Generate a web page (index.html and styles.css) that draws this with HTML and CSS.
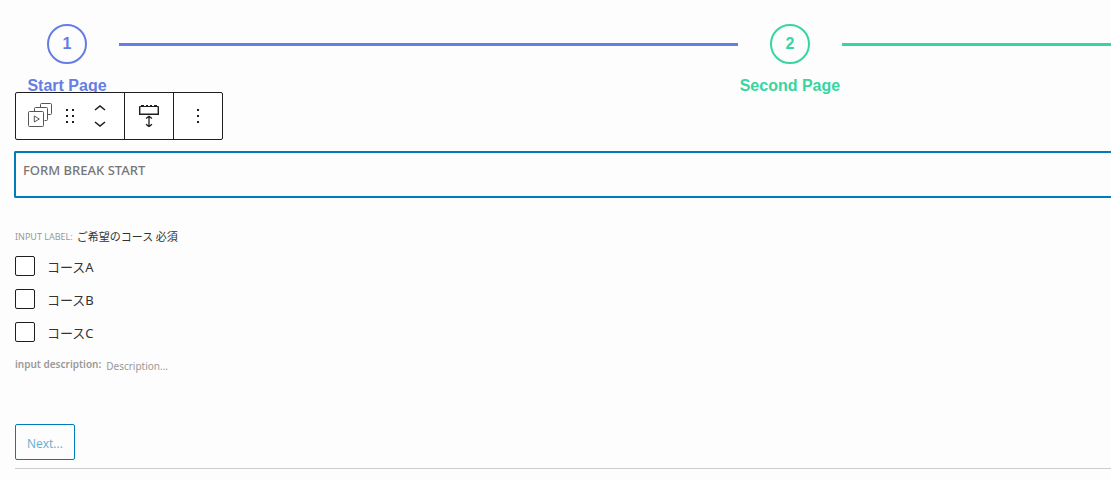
FILE: index.html
```
<!DOCTYPE html>
<html lang="ja">
<head>
<meta charset="utf-8">
<title>Form editor</title>
<link rel="stylesheet" href="styles.css">
</head>
<body>
<main class="editor">
  <div class="stepper">
    <div class="step">
      <span class="step-number">1</span>
      <span class="step-label">Start Page</span>
    </div>
    <span class="step-line"></span>
    <div class="step step-next">
      <span class="step-number">2</span>
      <span class="step-label">Second Page</span>
    </div>
    <span class="step-line step-line-next"></span>
  </div>

  <section class="block">
    <div class="toolbar" role="toolbar" aria-label="Block tools">
      <div class="tool-group">
        <button class="tool tool-type" type="button" aria-label="Block type">
          <svg width="24" height="26" viewBox="0 0 24 26" fill="none" stroke="#555">
            <path d="M12.5 4.5V1.500q0-1 1-1h9q1 0 1 1v9q0 1-1 1h-3"/>
            <path d="M6.500 8.500V5.500q0-1 1-1h11q1 0 1 1v11q0 1-1 1h-2"/>
            <rect x=".5" y="8.500" width="15" height="15" rx="1"/>
            <path d="M6.300 13l5 3-5 3z"/>
          </svg>
        </button>
        <button class="tool tool-drag" type="button" aria-label="Drag">
          <svg width="8" height="15" viewBox="0 0 8 15" fill="#1e1e1e">
            <path d="M0 0h2v2H0zM6 0h2v2H6zM0 6h2v2H0zM6 6h2v2H6zM0 12h2v2H0zM6 12h2v2H6z"/>
          </svg>
        </button>
        <div class="movers">
          <button class="tool" type="button" aria-label="Move up">
            <svg width="12" height="6" viewBox="0 0 12 6" fill="none" stroke="#1e1e1e" stroke-width="1.600"><path d="M1 5l5-4 5 4"/></svg>
          </button>
          <button class="tool" type="button" aria-label="Move down">
            <svg width="12" height="6" viewBox="0 0 12 6" fill="none" stroke="#1e1e1e" stroke-width="1.600"><path d="M1 1l5 4 5-4"/></svg>
          </button>
        </div>
      </div>
      <div class="tool-group tool-single">
        <button class="tool" type="button" aria-label="Page break">
          <svg width="20" height="22" viewBox="0 0 20 22" fill="none" stroke="#1e1e1e">
            <path d="M.7 1.500v7.800h18.600V1.500" stroke-width="1.400"/>
            <path d="M.5 1.500h19"/>
            <path d="M2 .5h3M7 .5h2M11 .5h2M15 .5h3"/>
            <path d="M10 11.500v10M7 13.500l3-2.300 3 2.300M7 19.300l3 2.300 3-2.300" stroke-width="1.300"/>
          </svg>
        </button>
      </div>
      <div class="tool-group tool-single">
        <button class="tool" type="button" aria-label="Options">
          <svg width="2" height="14" viewBox="0 0 2 14" fill="#1e1e1e"><path d="M0 0h2v2H0zM0 6h2v2H0zM0 12h2v2H0z"/></svg>
        </button>
      </div>
    </div>
    <h2 class="block-title">FORM BREAK START</h2>
  </section>

  <fieldset class="field">
    <legend class="field-heading"><span class="field-tag">INPUT LABEL:</span><span class="field-name">ご希望のコース 必須</span></legend>
    <label class="option"><input type="checkbox"><span>コースA</span></label>
    <label class="option"><input type="checkbox"><span>コースB</span></label>
    <label class="option"><input type="checkbox"><span>コースC</span></label>
    <div class="description">
      <label class="description-tag" for="desc">input description:</label>
      <input class="description-input" id="desc" type="text" placeholder="Description...">
    </div>
  </fieldset>

  <footer class="actions"><button class="next" type="button">Next...</button></footer>
</main>
</body>
</html>
```
FILE: styles.css
```
* {
  box-sizing: border-box;
}

body {
  margin: 0;
  background: #fdfdfd;
  color: #333;
  font-family: "Noto Sans", "Noto Sans CJK JP", sans-serif;
  font-size: 13px;
}

.editor {
  padding: 24px 0 0 15px;
  overflow-x: hidden;
}

.stepper {
  display: flex;
  align-items: flex-start;
}

.step {
  flex: none;
  width: 104px;
  display: flex;
  flex-direction: column;
  align-items: center;
  gap: 12px;
  color: #647ee3;
  font-family: "Liberation Sans", Arial, sans-serif;
  font-weight: 700;
}

.step-next {
  color: #37d5a0;
}

.step-number {
  display: grid;
  place-items: center;
  width: 40px;
  height: 40px;
  border: 2px solid;
  border-radius: 50%;
  font-size: 16px;
}

.step-label {
  font-size: 16px;
  line-height: 20px;
  white-space: nowrap;
}

.step-line {
  flex: 23 1 0;
  height: 3px;
  margin-top: 19px;
  background: #647ee3;
}

.step-line-next {
  flex-grow: 10;
  background: #37d5a0;
}

.block {
  position: relative;
  margin: 55px 0 0 -1px;
  padding: 8px 7px 17px;
  border: 2px solid #007cba;
  border-right: 0;
  border-radius: 2px 0 0 2px;
}

.block-title {
  margin: 0;
  color: #777;
  font-family: "Noto Sans", sans-serif;
  font-size: 13px;
  font-weight: 500;
  line-height: 18px;
}

.toolbar {
  position: absolute;
  left: -1px;
  bottom: 56px;
  display: flex;
  height: 48px;
  border: 1px solid #1e1e1e;
  border-radius: 2px;
  background: #fff;
}

.tool-group {
  display: flex;
  align-items: center;
}

.tool-group + .tool-group {
  border-left: 1px solid #1e1e1e;
}

.tool-single {
  width: 49px;
  justify-content: center;
}

.tool {
  display: grid;
  place-items: center;
  padding: 0;
  border: 0;
  background: none;
}

.tool-type {
  width: 48px;
}

.tool-drag {
  width: 12px;
}

.movers {
  display: grid;
  gap: 10px;
  width: 48px;
}

.field {
  margin: 30px 0 0;
  padding: 0;
  border: 0;
  min-width: 0;
}

.field-heading {
  display: flex;
  align-items: center;
  gap: 4px;
  padding: 0;
  height: 16px;
  margin-bottom: 12px;
}

.field-tag {
  color: #999;
  font-family: "Noto Sans", sans-serif;
  font-size: 9px;
}

.field-name {
  font-family: "Noto Sans CJK JP", sans-serif;
  font-size: 11px;
}

.option {
  display: flex;
  align-items: center;
  gap: 12px;
  height: 20px;
  margin-bottom: 13px;
}

.option input {
  appearance: none;
  width: 20px;
  height: 20px;
  margin: 0;
  border: 1px solid #1e1e1e;
  border-radius: 2px;
  background: #fff;
}

.description {
  display: flex;
  align-items: center;
  gap: 5px;
  height: 20px;
  color: #999;
  font-size: 10px;
}

.description-tag {
  padding-bottom: 2px;
  font-weight: 600;
}

.description-input {
  flex: 1;
  min-width: 0;
  padding: 2px 0 0;
  border: 0;
  background: none;
  font: inherit;
}

.description-input::placeholder {
  color: #999;
}

.actions {
  margin-top: 49px;
  padding-bottom: 8px;
  border-bottom: 1px solid #ccc;
}

.next {
  display: block;
  height: 36px;
  padding: 2px 11px 0;
  border: 1px solid #007cba;
  border-radius: 2px;
  background: #fdfdfd;
  color: #66acd2;
  font-family: "Open Sans", sans-serif;
  font-size: 12px;
}
```
